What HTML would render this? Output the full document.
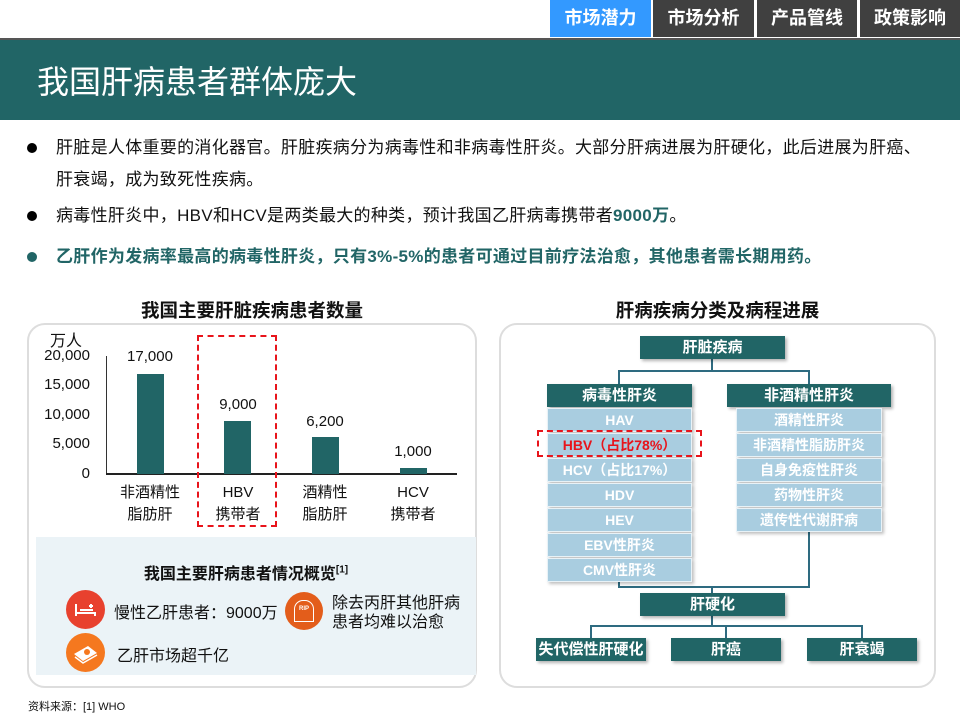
<!DOCTYPE html>
<html><head><meta charset="utf-8"><style>
*{margin:0;padding:0;box-sizing:border-box}
body{width:960px;height:720px;position:relative;background:#fff;font-family:"Liberation Sans","Noto Sans CJK SC",sans-serif;overflow:hidden;color:#111}
.a{position:absolute}
.tab{position:absolute;top:0;height:37px;color:#fff;font-weight:bold;font-size:18px;line-height:37px;text-align:center;background:#404040}
.b{position:absolute;left:56px;font-size:17px;line-height:20px;white-space:nowrap;letter-spacing:0.3px}
.dot{position:absolute;left:27px;width:10px;height:10px;border-radius:50%;background:#000}
.box{position:absolute;background:#216566;color:#fff;font-weight:bold;font-size:15px;text-align:center;line-height:23px;box-shadow:2px 2px 3px rgba(0,0,0,.3)}
.lb{position:absolute;background:#a9cde0;color:#fff;font-weight:bold;font-size:14px;text-align:center;line-height:22px;border:1px solid #e8f2f7;box-shadow:2px 2px 3px rgba(0,0,0,.25)}
.ln{position:absolute;background:#2e6b80}
.yl{position:absolute;right:870px;font-size:15px;line-height:16px}
.bar{position:absolute;background:#216566;width:27px}
.vl{position:absolute;font-size:15px;width:80px;text-align:center}
.cat{position:absolute;font-size:15px;width:80px;text-align:center;line-height:22px}
</style></head><body>
<div class="tab" style="left:550px;width:101px;background:#3399ff">市场潜力</div>
<div class="tab" style="left:653px;width:101px">市场分析</div>
<div class="tab" style="left:757px;width:100px">产品管线</div>
<div class="tab" style="left:860px;width:100px">政策影响</div>
<div class="a" style="left:0;top:38px;width:960px;height:3px;background:#555"></div>
<div class="a" style="left:0;top:40px;width:960px;height:80px;background:#216566"></div>
<div class="a" style="left:37px;top:60px;font-size:32px;color:#fff;line-height:44px">我国肝病患者群体庞大</div>

<div class="dot" style="top:143px"></div>
<div class="b" style="top:138px">肝脏是人体重要的消化器官。肝脏疾病分为病毒性和非病毒性肝炎。大部分肝病进展为肝硬化，此后进展为肝癌、</div>
<div class="b" style="top:170px">肝衰竭，成为致死性疾病。</div>
<div class="dot" style="top:211px"></div>
<div class="b" style="top:206px">病毒性肝炎中，HBV和HCV是两类最大的种类，预计我国乙肝病毒携带者<b style="color:#216566">9000万</b>。</div>
<div class="dot" style="top:252px;background:#216566"></div>
<div class="b" style="top:247px;color:#216566;font-weight:bold">乙肝作为发病率最高的病毒性肝炎，只有3%-5%的患者可通过目前疗法治愈，其他患者需长期用药。</div>

<div class="a" style="left:27px;top:297px;width:450px;text-align:center;font-weight:bold;font-size:18.5px">我国主要肝脏疾病患者数量</div>
<div class="a" style="left:27px;top:323px;width:450px;height:365px;border:2px solid #ddd;border-radius:18px"></div>
<div class="a" style="left:50px;top:327px;font-size:16px">万人</div>
<div class="yl" style="top:348px">20,000</div>
<div class="yl" style="top:377px">15,000</div>
<div class="yl" style="top:407px">10,000</div>
<div class="yl" style="top:436px">5,000</div>
<div class="yl" style="top:466px">0</div>
<div class="a" style="left:106px;top:356px;width:1px;height:118px;background:#333"></div>
<div class="a" style="left:106px;top:473px;width:351px;height:2px;background:#222"></div>
<div class="bar" style="left:137px;top:374px;height:100px"></div>
<div class="bar" style="left:224px;top:421px;height:53px"></div>
<div class="bar" style="left:312px;top:437px;height:37px"></div>
<div class="bar" style="left:400px;top:468px;height:6px"></div>
<div class="vl" style="left:110px;top:348px">17,000</div>
<div class="vl" style="left:198px;top:396px">9,000</div>
<div class="vl" style="left:285px;top:413px">6,200</div>
<div class="vl" style="left:373px;top:443px">1,000</div>
<div class="cat" style="left:110px;top:482px">非酒精性<br>脂肪肝</div>
<div class="cat" style="left:198px;top:482px">HBV<br>携带者</div>
<div class="cat" style="left:285px;top:482px">酒精性<br>脂肪肝</div>
<div class="cat" style="left:373px;top:482px">HCV<br>携带者</div>
<div class="a" style="left:197px;top:335px;width:80px;height:192px;border:2px dashed #e8141b"></div>

<div class="a" style="left:36px;top:537px;width:440px;height:138px;background:#ebf3f7"></div>
<div class="a" style="left:36px;top:560px;width:420px;text-align:center;font-weight:bold;font-size:16px">我国主要肝病患者情况概览<sup style="font-size:10px">[1]</sup></div>
<div class="a" style="left:66px;top:590px;width:39px;height:39px;border-radius:50%;background:#e8412e"></div>
<svg class="a" style="left:66px;top:590px" width="39" height="39"><path d="M10 14v12M10 23h19v3M14 20h13M23 16h4M25 14v4" stroke="#fff" stroke-width="2" fill="none"/></svg>
<div class="a" style="left:114px;top:599px;font-size:16px">慢性乙肝患者：9000万</div>
<div class="a" style="left:285px;top:592px;width:38px;height:38px;border-radius:50%;background:#e35d1b"></div>
<div class="a" style="left:294px;top:600px;width:20px;height:22px;border:1.5px solid #fff;border-radius:9px 9px 0 0;color:#fff;font-size:6px;font-weight:bold;text-align:center;line-height:16px">RIP</div>
<div class="a" style="left:332px;top:594px;font-size:16px;line-height:19px">除去丙肝其他肝病<br>患者均难以治愈</div>
<div class="a" style="left:66px;top:633px;width:39px;height:39px;border-radius:50%;background:#f5781f"></div>
<svg class="a" style="left:66px;top:633px" width="39" height="39"><path d="M8 21l14-8 9 7-14 8z" fill="#fff"/><path d="M9 24l8 6 14-8" stroke="#fff" stroke-width="1.5" fill="none"/><circle cx="21" cy="19" r="3" fill="#f5781f"/></svg>
<div class="a" style="left:117px;top:642px;font-size:16px">乙肝市场超千亿</div>
<div class="a" style="left:28px;top:698px;font-size:11px">资料来源：[1] WHO</div>

<div class="a" style="left:500px;top:297px;width:435px;text-align:center;font-weight:bold;font-size:18.5px">肝病疾病分类及病程进展</div>
<div class="a" style="left:499px;top:323px;width:437px;height:365px;border:2px solid #ddd;border-radius:18px"></div>
<div class="ln" style="left:711px;top:359px;width:2px;height:13px"></div>
<div class="ln" style="left:618px;top:370px;width:192px;height:2px"></div>
<div class="ln" style="left:618px;top:370px;width:2px;height:14px"></div>
<div class="ln" style="left:808px;top:370px;width:2px;height:14px"></div>
<div class="ln" style="left:618px;top:578px;width:2px;height:10px"></div>
<div class="ln" style="left:808px;top:530px;width:2px;height:58px"></div>
<div class="ln" style="left:618px;top:586px;width:192px;height:2px"></div>
<div class="ln" style="left:711px;top:586px;width:2px;height:8px"></div>
<div class="ln" style="left:711px;top:616px;width:2px;height:11px"></div>
<div class="ln" style="left:590px;top:625px;width:273px;height:2px"></div>
<div class="ln" style="left:590px;top:625px;width:2px;height:13px"></div>
<div class="ln" style="left:725px;top:625px;width:2px;height:13px"></div>
<div class="ln" style="left:861px;top:625px;width:2px;height:13px"></div>
<div class="box" style="left:640px;top:336px;width:145px">肝脏疾病</div>
<div class="box" style="left:547px;top:384px;width:145px">病毒性肝炎</div>
<div class="box" style="left:727px;top:384px;width:164px">非酒精性肝炎</div>
<div class="lb" style="left:547px;top:408px;width:145px">HAV</div>
<div class="lb" style="left:547px;top:433px;width:145px;color:#e8141b">HBV（占比78%）</div>
<div class="lb" style="left:547px;top:458px;width:145px">HCV（占比17%）</div>
<div class="lb" style="left:547px;top:483px;width:145px">HDV</div>
<div class="lb" style="left:547px;top:508px;width:145px">HEV</div>
<div class="lb" style="left:547px;top:533px;width:145px">EBV性肝炎</div>
<div class="lb" style="left:547px;top:558px;width:145px">CMV性肝炎</div>
<div class="lb" style="left:736px;top:408px;width:146px">酒精性肝炎</div>
<div class="lb" style="left:736px;top:433px;width:146px">非酒精性脂肪肝炎</div>
<div class="lb" style="left:736px;top:458px;width:146px">自身免疫性肝炎</div>
<div class="lb" style="left:736px;top:483px;width:146px">药物性肝炎</div>
<div class="lb" style="left:736px;top:508px;width:146px">遗传性代谢肝病</div>
<div class="a" style="left:537px;top:430px;width:165px;height:27px;border:2px dashed #e8141b"></div>
<div class="box" style="left:640px;top:593px;width:145px">肝硬化</div>
<div class="box" style="left:536px;top:638px;width:110px">失代偿性肝硬化</div>
<div class="box" style="left:671px;top:638px;width:110px">肝癌</div>
<div class="box" style="left:807px;top:638px;width:110px">肝衰竭</div>
</body></html>
